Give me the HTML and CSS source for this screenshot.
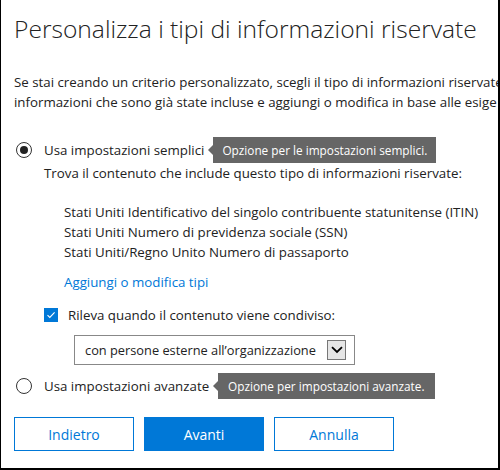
FILE: index.html
```html
<!DOCTYPE html>
<html lang="it">
<head>
<meta charset="utf-8">
<link rel="stylesheet" href="styles.css">
</head>
<body>
<div class="frame">
  <h1 class="title">Personalizza i tipi di informazioni riservate</h1>
  <p class="intro">Se stai creando un criterio personalizzato, scegli il tipo di informazioni riservate<br>informazioni che sono già state incluse e aggiungi o modifica in base alle esige</p>

  <div class="option">
    <span class="radio checked"></span>
    <span class="label">Usa impostazioni semplici</span>
    <span class="tip tip1">Opzione per le impostazioni semplici.</span>
  </div>
  <div class="sub">Trova il contenuto che include questo tipo di informazioni riservate:</div>
  <ul class="types">
    <li>Stati Uniti Identificativo del singolo contribuente statunitense (ITIN)</li>
    <li>Stati Uniti Numero di previdenza sociale (SSN)</li>
    <li>Stati Uniti/Regno Unito Numero di passaporto</li>
  </ul>
  <a class="link">Aggiungi o modifica tipi</a>

  <div class="check-row">
    <span class="checkbox"><svg width="14" height="14" viewBox="0 0 14 14"><path d="M3.5 7.2 L5.8 9.4 L10.6 4.4" fill="none" stroke="#fff" stroke-width="1.1"/></svg></span>
    <span class="label">Rileva quando il contenuto viene condiviso:</span>
  </div>
  <div class="select">
    <span class="select-text">con persone esterne all’organizzazione</span>
    <span class="select-btn"><svg width="12" height="8" viewBox="0 0 12 8"><path d="M1 1.2 L6 6 L11 1.2" fill="none" stroke="#000" stroke-width="1.8"/></svg></span>
  </div>

  <div class="option option2">
    <span class="radio"></span>
    <span class="label">Usa impostazioni avanzate</span>
    <span class="tip tip2">Opzione per impostazioni avanzate.</span>
  </div>

  <div class="buttons">
    <button class="btn">Indietro</button>
    <button class="btn primary">Avanti</button>
    <button class="btn">Annulla</button>
  </div>
</div>
</body>
</html>
```

FILE: styles.css
```css
html, body {
  margin: 0;
  padding: 0;
  background: #fff;
}
.frame {
  box-sizing: border-box;
  width: 500px;
  height: 470px;
  border-left: 1px solid #000;
  border-right: 2px solid #000;
  border-bottom: 2px solid #000;
  padding: 0 0 0 13px;
  overflow: hidden;
  font-family: "Open Sans", "Liberation Sans", sans-serif;
  font-size: 13.3px;
  color: #222;
}
.title {
  margin: 12px 0 0;
  font-weight: 300;
  font-size: 24.6px;
  line-height: 34px;
  color: #222;
  white-space: nowrap;
}
.intro {
  margin: 26px 0 0;
  line-height: 20px;
  white-space: nowrap;
  overflow: hidden;
}
.option {
  display: flex;
  align-items: center;
  margin-top: 25px;
  height: 26px;
}
.radio {
  box-sizing: border-box;
  width: 16px;
  height: 16px;
  border: 1.5px solid #333;
  border-radius: 50%;
  margin-left: 2px;
  display: flex;
  align-items: center;
  justify-content: center;
}
.radio.checked::after {
  content: "";
  width: 8px;
  height: 8px;
  border-radius: 50%;
  background: #222;
}
.option .label {
  margin-left: 12px;
}
.tip {
  position: relative;
  margin-left: 9px;
  background: #666;
  color: #fff;
  font-size: 11.8px;
  height: 26px;
  line-height: 26px;
  padding: 0 9px;
  white-space: nowrap;
}
.tip::before {
  content: "";
  position: absolute;
  left: -5px;
  top: 8px;
  border-top: 5px solid transparent;
  border-bottom: 5px solid transparent;
  border-right: 5px solid #666;
}
.tip2 {
  padding: 0 10px;
}
.sub {
  margin-left: 30px;
  line-height: 20px;
}
.types {
  list-style: none;
  margin: 19px 0 0 50px;
  padding: 0;
  line-height: 20px;
}
.link {
  display: block;
  margin: 10px 0 0 50px;
  line-height: 20px;
  color: #0078d7;
}
.check-row {
  display: flex;
  align-items: center;
  margin: 13px 0 0 30px;
  height: 20px;
}
.checkbox {
  width: 14px;
  height: 14px;
  background: #0078d7;
  display: flex;
}
.check-row .label {
  margin-left: 10px;
}
.select {
  box-sizing: border-box;
  display: flex;
  align-items: center;
  justify-content: space-between;
  width: 281px;
  height: 30px;
  margin: 10px 0 0 60px;
  border: 1px solid #888;
  padding: 0 8px 0 10px;
}
.select-text {
  font-size: 12.8px;
}
.select-btn {
  box-sizing: border-box;
  width: 19px;
  height: 20px;
  background: #e6e6e6;
  border: 1px solid #777;
  display: flex;
  align-items: center;
  justify-content: center;
}
.option2 {
  margin-top: 8px;
}
.buttons {
  display: flex;
  gap: 10px;
  margin-top: 18px;
}
.btn {
  box-sizing: border-box;
  width: 120px;
  height: 34px;
  border: 1px solid #0078d7;
  background: #fff;
  color: #0078d7;
  font-family: inherit;
  font-size: 14px;
  padding: 0;
}
.btn.primary {
  background: #0078d7;
  color: #fff;
}
```
